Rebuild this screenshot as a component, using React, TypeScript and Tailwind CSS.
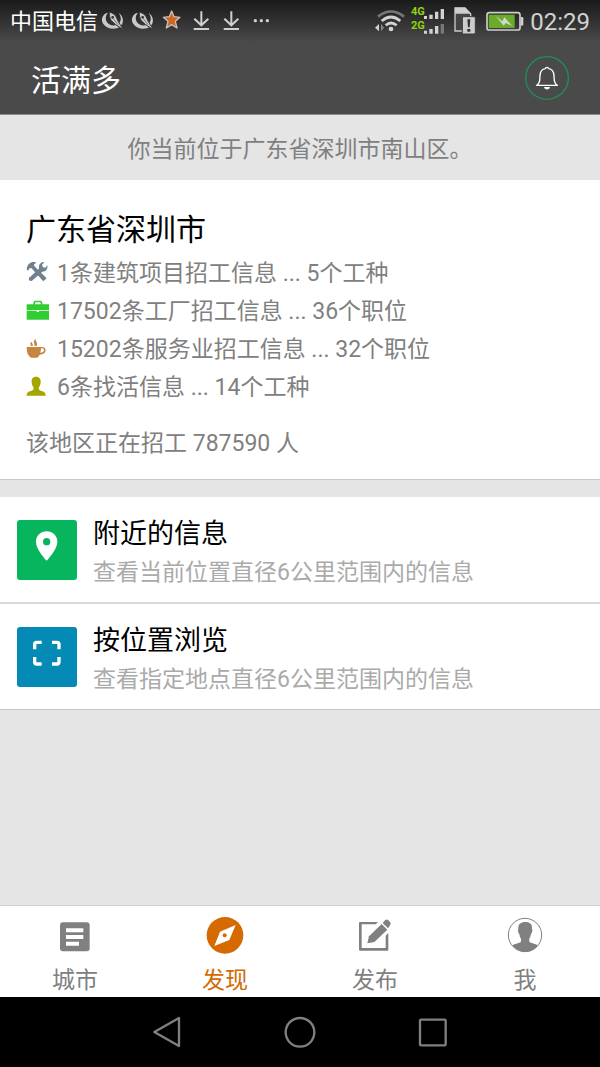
import React, { useState } from 'react';

const Download: React.FC = () => (
  <svg viewBox="0 0 90 90" className="h-[30px] w-[30px]" fill="none" stroke="#d0d0d0" strokeWidth="6">
    <path d="M40 16v41M19 38l21 20 21-20M17 69h46" />
  </svg>
);

const Needle: React.FC = () => (
  <svg viewBox="-3 0 90 90" className="h-[30px] w-[30px]" fill="#c9c9c9">
    <path d="M27 20C10 23 4 41 13 54c11 17 41 20 54 4 9-12 5-30-9-38 9 10 10 24 2 32-10 10-29 8-36-3-6-9-5-20 3-29z" />
    <path d="M31 18c8 3 17 7 20 14l7 15 15 24-23-15-13-12c-5-6-6-17-6-26z" stroke="#3a3a3a" strokeWidth="3" />
    <circle cx="41" cy="34" r="4" fill="#333" />
    <path d="M43 38l14 18" stroke="#555" strokeWidth="2" />
  </svg>
);

const StatusBar: React.FC = () => (
  <div className="flex h-[42px] items-center justify-between px-2.5 text-[#d2d2d2]">
    <div className="flex items-center">
      <span className="pt-0.5 text-[22px] leading-7 text-white">中国电信</span>
      <Needle />
      <Needle />
      <svg viewBox="0 0 90 90" className="h-[30px] w-[30px]">
        <path d="M41 15l7 17 18 2-14 12 5 20-16-10-16 10 5-20-14-12 18-2z" fill="#d06420" stroke="#c4c4c4" strokeWidth="4" strokeLinejoin="round" />
      </svg>
      <Download />
      <Download />
      <svg viewBox="0 0 90 90" className="h-[30px] w-[30px]" fill="#d0d0d0">
        <circle cx="22" cy="44" r="5" />
        <circle cx="40" cy="44" r="5" />
        <circle cx="58" cy="44" r="5" />
      </svg>
    </div>

    <div className="flex items-center gap-1.5">
      <svg viewBox="0 0 90 90" className="h-[30px] w-[30px]" fill="none" strokeWidth="8">
        <path d="M9 32q39-31 78 0" stroke="#777" />
        <path d="M20 45q28-24 56 0M32 58q16-14 33 0" stroke="#d2d2d2" />
        <circle cx="48" cy="69" r="7" fill="#d2d2d2" />
        <path d="M0 65l12-11v22z" fill="#d2d2d2" />
        <path d="M27 65L18 54v22z" fill="#888" />
      </svg>
      <svg viewBox="0 0 111 90" className="h-[30px] w-[37px]" fill="#d2d2d2">
        <text x="0" y="26" fontSize="33" fill="#8fd40c" className="font-bold">4G</text>
        <text x="0" y="69" fontSize="33" fill="#8fd40c" className="font-bold">2G</text>
        <path d="M39 30h9v9h-9zM55 26h10v13H55zM72 17h10v22H72zM89 9h10v30H89z" />
        <path d="M39 74h9v9h-9zM55 69h10v14H55zM72 60h10v23H72z" />
        <path d="M89 54h10v29H89z" fill="#777" />
      </svg>
      <svg viewBox="0 0 78 90" className="h-[30px] w-[26px]">
        <path d="M3 6h30l17 17v52H3z" fill="#444" stroke="#cdcdcd" strokeWidth="4" />
        <path d="M3 5h30l18 18H3z" fill="#cdcdcd" />
        <rect x="25" y="32" width="39" height="52" rx="4" fill="#cdcdcd" stroke="#3c3c3c" strokeWidth="3" />
        <path d="M40 40h9l-2 24h-5zM40 69h9v8h-9z" fill="#333" />
      </svg>
      <svg viewBox="0 0 114 90" className="h-[30px] w-[38px]">
        <rect x="3" y="20" width="99" height="52" rx="7" fill="none" stroke="#cdcdcd" strokeWidth="5" />
        <path d="M104 33h4q4 0 4 4v18q0 4-4 4h-4z" fill="#cdcdcd" />
        <rect x="8" y="26" width="78" height="40" fill="#6aab2a" />
        <path d="M29 30l20 16 6-12 24 26-20-9-6 8z" fill="#d5d5d5" />
      </svg>
      <span className="pt-0.5 text-2xl leading-7">02:29</span>
    </div>
  </div>
);

const ToolsIcon: React.FC = () => (
  <svg viewBox="0 4 72 72" className="h-6 w-6 shrink-0" fill="#708090">
    <path d="M2 26C3 12 12 3 27 3l3 4c-5 2-7 5-5 9l8 8 29 29-10 9-28-31-8-9-5 1-5 7z" />
    <path d="M55 4l-7 9 3 7 8 1 5-8c2 12-4 20-15 20L18 60q-6 3-9-3-2-5 3-8l27-25C37 12 44 3 55 4z" />
  </svg>
);

const BriefcaseIcon: React.FC = () => (
  <svg viewBox="0 4 72 72" className="h-6 w-6 shrink-0" fill="#32cd32">
    <path d="M22 17v-5q0-6 6-6h15q6 0 6 6v5h20v17H2V17zm5 0h17v-4q0-2-2-2H29q-2 0-2 2z" />
    <path d="M2 36h30v4h7v-4h30v27H2z" />
  </svg>
);

const CoffeeIcon: React.FC = () => (
  <svg viewBox="0 4 72 72" className="h-6 w-6 shrink-0" fill="#c68642">
    <path fillRule="evenodd" d="M2 31h43c7-1 14 1 14 9 0 9-8 14-18 14-2 4-4 7-8 9H15C5 57 2 46 2 31zm43 4c0 5-1 9-2 13 7 0 11-3 11-8 0-4-4-6-9-5z" />
    <path d="M29 6c-2 8 8 10 3 22h-7c4-9-8-11 4-22zM18 15c-2 5 5 7 2 13h-6c2-6-5-8 4-13z" />
  </svg>
);

const PersonIcon: React.FC = () => (
  <svg viewBox="0 4 72 72" className="h-6 w-6 shrink-0" fill="#a5a500">
    <path d="M30 6c10 0 15 7 14 16 0 8-3 13-6 17 0 6 3 8 8 10 9 2 13 5 13 14H2c0-9 4-12 13-14 5-2 8-4 8-10-3-4-6-9-6-17C16 13 20 6 30 6z" />
  </svg>
);

const PinIcon: React.FC = () => (
  <svg viewBox="0 0 180 180" className="h-full w-full" fill="#fff">
    <path fillRule="evenodd" d="M89 34c-18 0-32 14-32 31 0 24 32 57 32 57s32-33 32-57c0-17-14-31-32-31zm0 20a11 11 0 1 1 0 22 11 11 0 0 1 0-22z" />
  </svg>
);

const ScanIcon: React.FC = () => (
  <svg viewBox="0 0 180 180" className="h-full w-full" fill="none" stroke="#fff" strokeWidth="10">
    <path d="M53 67V52q0-6 6-6h15M105 46h15q6 0 6 6v15M126 90v15q0 6-6 6h-15M74 111H59q-6 0-6-6V90" />
  </svg>
);

const CityIcon: React.FC = () => (
  <svg viewBox="0 0 120 120" className="h-10 w-10">
    <rect x="15" y="19" width="89" height="87" rx="9" fill="currentColor" />
    <path d="M33 37h52v12H33zM33 57h52v12H33zM33 77h39v12H33z" fill="#fff" />
  </svg>
);

const CompassIcon: React.FC = () => (
  <svg viewBox="0 0 120 120" className="h-10 w-10">
    <circle cx="60" cy="58" r="55" fill="currentColor" />
    <path d="M92 27L73 72 28 90 45 47z" fill="#fff" />
    <circle cx="59" cy="58" r="6" fill="currentColor" />
  </svg>
);

const PublishIcon: React.FC = () => (
  <svg viewBox="0 0 120 120" className="h-10 w-10" fill="currentColor">
    <path d="M15 18h54l-7 7H20v71h72V59l8-8v50q0 3-3 3H16q-4 0-4-3V21q0-3 3-3z" />
    <path d="M37 82l5-21 38-37 17 17-39 37z" />
    <path d="M83 21l7-8q5-5 10 0l5 5q5 5 0 10l-6 9z" />
  </svg>
);

const MeIcon: React.FC = () => (
  <svg viewBox="0 0 120 120" className="h-10 w-10" fill="currentColor">
    <circle cx="60" cy="57" r="50" fill="none" stroke="currentColor" strokeWidth="3" />
    <path d="M61 18c14 0 21 7 20 19l1 6c0 6-2 9-4 11-1 7-3 11-5 14v9c4 4 19 6 26 11-8 12-22 20-38 20S31 100 22 88c7-5 22-7 26-11v-9c-3-3-4-7-5-14-3-2-4-6-4-11l1-6c-1-12 7-19 21-19z" />
  </svg>
);

const stats = [
  { icon: <ToolsIcon />, text: '1条建筑项目招工信息 ... 5个工种' },
  { icon: <BriefcaseIcon />, text: '17502条工厂招工信息 ... 36个职位' },
  { icon: <CoffeeIcon />, text: '15202条服务业招工信息 ... 32个职位' },
  { icon: <PersonIcon />, text: '6条找活信息 ... 14个工种' },
];

const tabs = [
  { label: '城市', icon: <CityIcon /> },
  { label: '发现', icon: <CompassIcon /> },
  { label: '发布', icon: <PublishIcon /> },
  { label: '我', icon: <MeIcon /> },
];

interface EntryProps {
  icon: React.ReactNode;
  color: string;
  title: string;
  desc: string;
}

const Entry: React.FC<EntryProps> = ({ icon, color, title, desc }) => (
  <button className="flex w-full items-start gap-4 bg-white px-[17px] pt-[17px] pb-2.5 text-left">
    <span className={`mt-1.5 block h-[60px] w-[60px] shrink-0 rounded-[3px] ${color}`}>{icon}</span>
    <span className="block">
      <span className="block text-[27px] leading-10 text-black">{title}</span>
      <span className="block text-[23px] leading-[38px] text-[#aaa]">{desc}</span>
    </span>
  </button>
);

const App: React.FC = () => {
  const [active, setActive] = useState('发现');

  return (
    <div className="flex min-h-screen flex-col bg-[#e5e5e5] font-[Roboto,'Noto_Sans_CJK_SC',sans-serif] text-[23px] text-[#808080]">
      <header className="border-b border-[#8a8a8a] bg-[#4a4a4a] bg-linear-to-b from-[#1a1a1a] to-[#4a4a4a] to-[42px]">
        <StatusBar />
        <div className="flex h-[72px] items-center justify-between px-[31px]">
          <h1 className="pt-1.5 text-3xl text-white">活满多</h1>
          <button aria-label="通知" className="h-11 w-11">
            <svg viewBox="0 0 132 132" className="h-full w-full">
              <circle cx="66" cy="66" r="64" fill="none" stroke="#1f8f58" strokeWidth="4" />
              <path d="M35 88c12-8 9-18 10-29 1-13 7-20 16-21 1-5 9-5 10 0 9 1 15 8 16 21 1 11-2 21 10 29z" fill="none" stroke="#fff" strokeWidth="4" strokeLinejoin="round" />
              <path d="M57 93h18c-1 10-17 10-18 0z" fill="#fff" />
            </svg>
          </button>
        </div>
      </header>

      <main className="flex-1">
        <p className="pt-[17px] pb-[13px] text-center leading-[35px]">你当前位于广东省深圳市南山区。</p>

        {/* 地区统计 */}
        <section className="border-b border-[#c8c8c8] bg-white px-[26px] pt-[30px] pb-4">
          <h2 className="text-3xl leading-10 text-black">广东省深圳市</h2>
          <ul className="mt-[5px]">
            {stats.map((item) => (
              <li key={item.text} className="flex items-center gap-[7px] leading-[38px]">
                {item.icon}
                <span>{item.text}</span>
              </li>
            ))}
          </ul>
          <p className="mt-[18px] leading-[38px]">该地区正在招工 787590 人</p>
        </section>

        {/* 浏览入口 */}
        <section className="mt-[17px] divide-y-2 divide-[#d9d9d9] border-b border-[#c8c8c8]">
          <Entry icon={<PinIcon />} color="bg-[#07b55f]" title="附近的信息" desc="查看当前位置直径6公里范围内的信息" />
          <Entry icon={<ScanIcon />} color="bg-[#0589b5]" title="按位置浏览" desc="查看指定地点直径6公里范围内的信息" />
        </section>
      </main>

      <nav className="grid grid-cols-4 border-t border-[#d0d0d0] bg-white">
        {tabs.map((tab) => (
          <button
            key={tab.label}
            onClick={() => setActive(tab.label)}
            className={`flex flex-col items-center gap-2.5 pt-2.5 pb-px leading-[30px] ${
              active === tab.label ? 'text-[#d46a00]' : 'text-[#808080]'
            }`}
          >
            {tab.icon}
            <span>{tab.label}</span>
          </button>
        ))}
      </nav>

      {/* 系统导航键 */}
      <div className="flex h-[70px] items-center justify-center gap-[93px] bg-black text-[#808080]">
        <button aria-label="返回" className="h-10 w-10">
          <svg viewBox="0 0 120 120" className="h-full w-full" fill="none" stroke="currentColor" strokeWidth="7" strokeLinejoin="round">
            <path d="M22 60l74-42v84z" />
          </svg>
        </button>
        <button aria-label="主页" className="h-10 w-10">
          <svg viewBox="0 0 120 120" className="h-full w-full" fill="none" stroke="currentColor" strokeWidth="7">
            <circle cx="60" cy="61" r="43" />
          </svg>
        </button>
        <button aria-label="最近任务" className="h-10 w-10">
          <svg viewBox="0 0 120 120" className="h-full w-full" fill="none" stroke="currentColor" strokeWidth="7">
            <rect x="21" y="23" width="77" height="77" rx="3" />
          </svg>
        </button>
      </div>
    </div>
  );
};

export default App;
